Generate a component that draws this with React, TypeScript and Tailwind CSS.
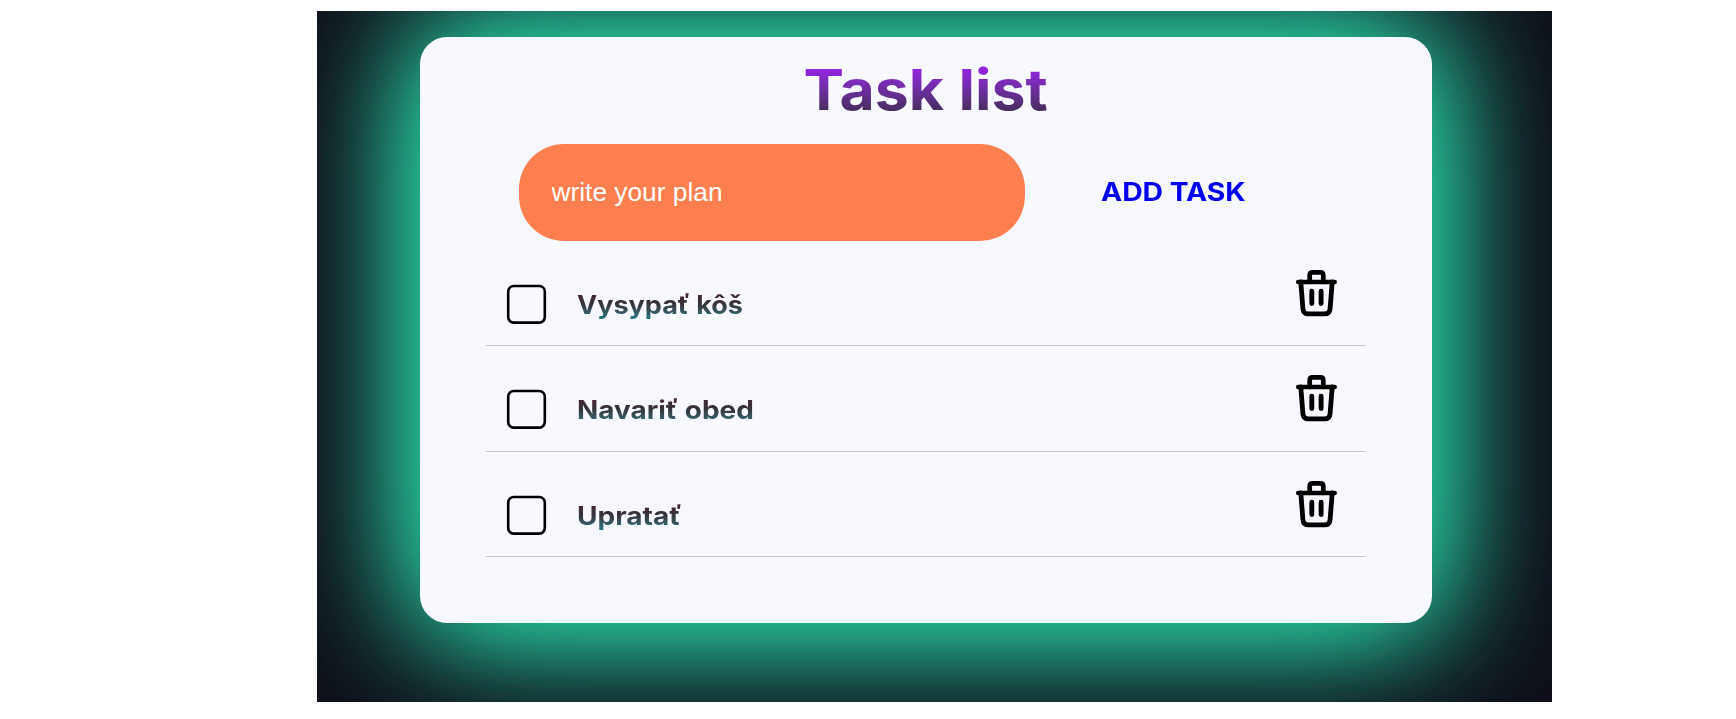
const tasks = [
  { title: "Vysypať kôš", stretch: "scale-x-[1.06]" },
  { title: "Navariť obed", stretch: "scale-x-[1.095]" },
  { title: "Upratať", stretch: "scale-x-[1.1]" },
];

function CheckBox() {
  return (
    <svg className="ml-[20px] mt-[43px] size-[42px] shrink-0" viewBox="0 0 42 42" fill="none">
      <rect x="2.2" y="2" width="36.6" height="36.6" rx="5.5" stroke="#000" strokeWidth="2.6" />
    </svg>
  );
}

function TrashIcon() {
  return (
    <svg
      className="mr-[26px] ml-auto mt-[27px] h-[50px] w-[48px] shrink-0"
      viewBox="0 0 48 50"
      fill="none"
      stroke="#000"
      strokeWidth="4.9"
      strokeLinecap="round"
      strokeLinejoin="round"
    >
      <path d="M6.200 14H42.700" strokeWidth="4.500" />
      <path d="M17.700 14V7.200Q17.700 4.300 20.600 4.300H28.400Q31.300 4.300 31.300 7.200V14" strokeWidth="4.700" />
      <path d="M8.800 14L10.900 40.500Q11.300 45.900 16.300 45.900H32.700Q37.700 45.900 38.100 40.500L40.200 14" strokeWidth="4.800" />
      <path d="M19.800 23.300V35.500M29.100 23.300V35.500" />
    </svg>
  );
}

export default function App() {
  return (
    <div className="h-[719px] w-full overflow-hidden bg-white pt-[11px] pl-[317px]">
      <main className="h-[691px] w-[1235px] overflow-hidden bg-[#100f19] pt-[26px] pl-[103px]">
        <section className="h-[586px] w-[1012px] rounded-[27px] bg-[#f8f8ff] px-[66px] font-['Inter',sans-serif] shadow-[0_0_124px_rgb(43,225,165),0_0_134px_rgb(40,215,185)]">
          <h1 className="h-[107px] pt-[19px] text-center text-[56px] leading-[68px] font-bold">
            <span className="inline-block scale-x-[1.085] bg-linear-to-b from-[#a018f8] from-10% to-[#33263a] bg-clip-text text-transparent">
              Task list
            </span>
          </h1>
          <form className="flex h-[96.5px] items-start pl-[33px]">
            <input
              className="h-[97px] w-[506px] rounded-[45px] bg-[#ff7f50] pr-[33px] pb-[1px] pl-[32.5px] font-['Liberation_Sans',sans-serif] text-[26.3px] text-white outline-none placeholder:text-white placeholder:opacity-100"
              placeholder="write your plan"
            />
            <button
              type="button"
              className="ml-[76px] h-[96px] origin-left scale-x-[1.115] text-[25.400px] font-bold whitespace-nowrap text-[#0000ee]"
            >
              ADD TASK
            </button>
          </form>
          <ul>
            {tasks.map((task) => (
              <li key={task.title} className="flex h-[105.5px] items-start border-b border-[#c8c8cc]">
                <CheckBox />
                <span
                  className={`mt-[47px] ml-[28.5px] origin-left bg-linear-to-b from-[#4a1f38] from-10% via-[#353338] via-48% to-[#0f8292] bg-clip-text text-[25.500px] leading-[33px] font-bold text-transparent ${task.stretch}`}
                >
                  {task.title}
                </span>
                <TrashIcon />
              </li>
            ))}
          </ul>
        </section>
      </main>
    </div>
  );
}
